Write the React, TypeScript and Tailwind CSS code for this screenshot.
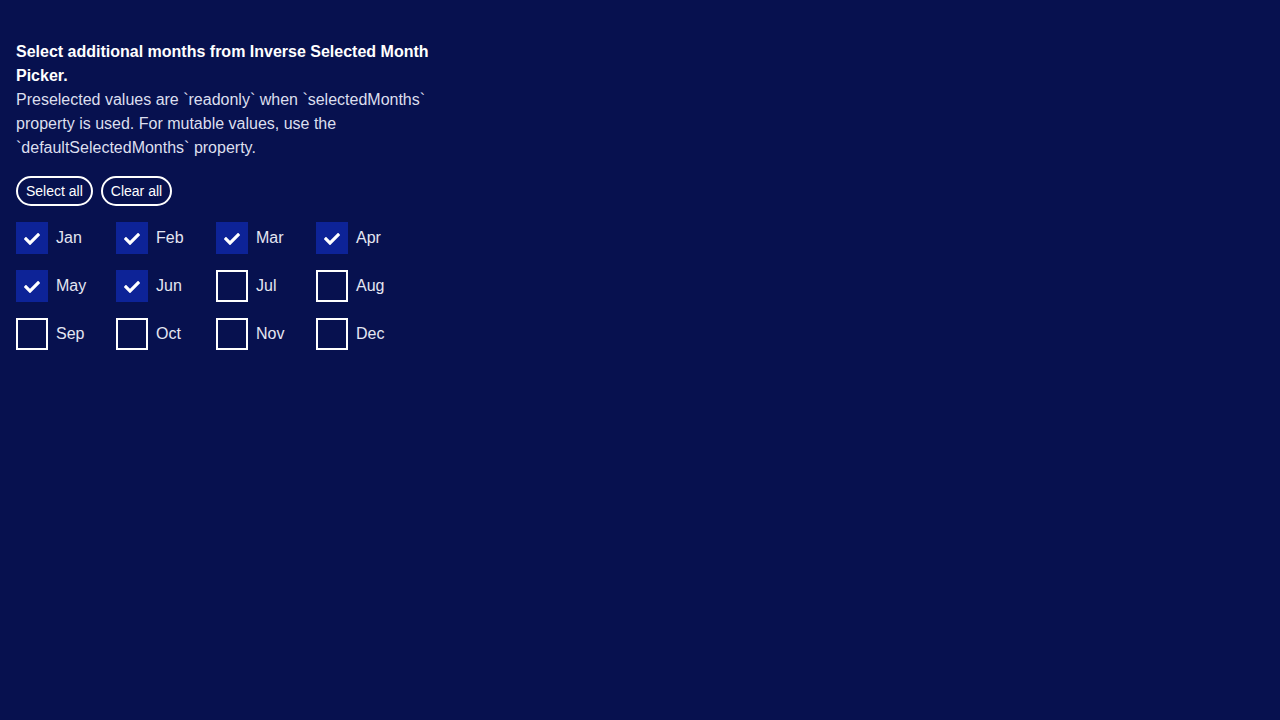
import { useState } from 'react';
import { FaCheck } from 'react-icons/fa';

const MONTHS = ['Jan', 'Feb', 'Mar', 'Apr', 'May', 'Jun', 'Jul', 'Aug', 'Sep', 'Oct', 'Nov', 'Dec'];
const LOCKED = [0, 1, 2, 3, 4, 5];

export default function App() {
  const [extra, setExtra] = useState<number[]>([]);

  const isOn = (i: number) => LOCKED.includes(i) || extra.includes(i);

  const toggle = (i: number) => {
    if (LOCKED.includes(i)) return;
    setExtra(prev => (prev.includes(i) ? prev.filter(x => x !== i) : [...prev, i]));
  };

  return (
    <div className="min-h-screen w-full bg-[#07114f] text-white px-4 pt-10" style={{ fontFamily: '"Liberation Sans", Arial, sans-serif' }}>
      <div className="w-[448px] text-base leading-6">
        <div className="font-bold text-white">Select additional months from Inverse Selected Month Picker.</div>
        <div className="text-[#dcdfee]">
          Preselected values are `readonly` when `selectedMonths` property is used. For mutable values, use the
          `defaultSelectedMonths` property.
        </div>
      </div>

      {/* actions */}
      <div className="flex gap-2 mt-4">
        <button
          onClick={() => setExtra([6, 7, 8, 9, 10, 11])}
          className="h-[30px] px-[8px] rounded-full border-2 border-white text-sm text-white leading-none"
        >
          Select all
        </button>
        <button
          onClick={() => setExtra([])}
          className="h-[30px] px-[8px] rounded-full border-2 border-white text-sm text-white leading-none"
        >
          Clear all
        </button>
      </div>

      {/* month grid */}
      <div className="grid grid-cols-[100px_100px_100px_100px] gap-y-4 mt-4">
        {MONTHS.map((m, i) => (
          <label key={m} className="flex items-center gap-2 h-8 cursor-pointer" onClick={() => toggle(i)}>
            {isOn(i) ? (
              <span className="w-8 h-8 bg-[#0d2397] flex items-center justify-center pt-[2px]">
                <FaCheck size={16} color="white" />
              </span>
            ) : (
              <span className="w-8 h-8 border-2 border-white" />
            )}
            <span className="text-base text-[#e4e6f2]">{m}</span>
          </label>
        ))}
      </div>
    </div>
  );
}
